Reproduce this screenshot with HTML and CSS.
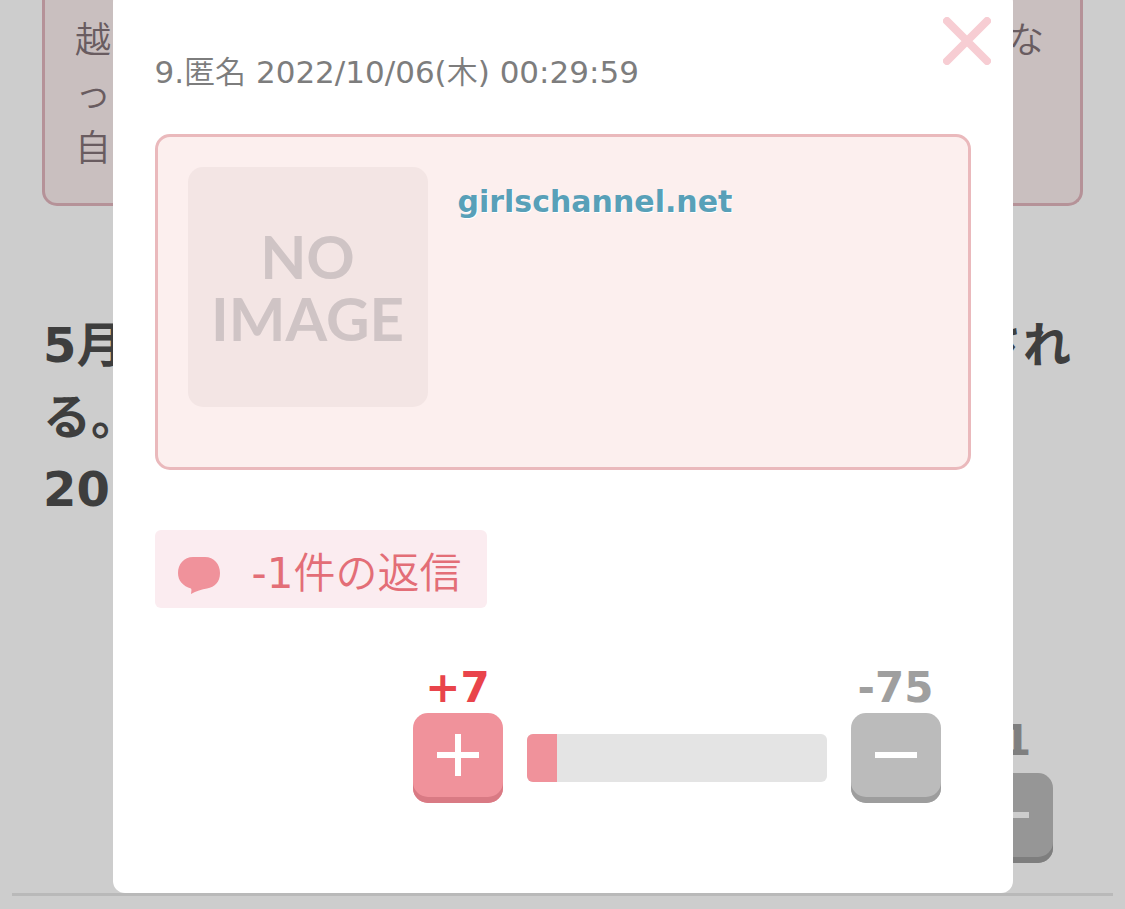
FILE: index.html
```html
<!DOCTYPE html>
<html lang="ja">
<head>
    <meta charset="UTF-8">
    <meta name="viewport" content="width=device-width, initial-scale=1.0">
    <title>コメント</title>
    <link rel="stylesheet" href="styles.css">
</head>
<body>

<main class="page">
    <div class="quote">
        <p class="line"><span>越</span><span>な</span></p>
        <p class="line">っ</p>
        <p class="line">自</p>
    </div>

    <div class="comment-body">
        <p class="line"><span>5月</span><span>され</span></p>
        <p class="line">る。</p>
        <p class="line">20</p>
    </div>

    <div class="vote">
        <div class="vote-item">
            <span class="count count-minus">-1</span>
            <button type="button" class="vote-btn btn-minus" aria-label="マイナス">
                <svg width="42" height="42" viewBox="0 0 42 42"><path d="M0 21H42" /></svg>
            </button>
        </div>
    </div>
    <hr>
</main>

<div class="overlay"></div>

<div class="modal" role="dialog">
    <button type="button" class="close" aria-label="閉じる">
        <svg width="48" height="48" viewBox="0 0 48 48"><path d="M4 4L44 44M44 4L4 44" /></svg>
    </button>

    <p class="info">9.<span class="light">匿名</span> 2022/10/06(<span class="light">木</span>) 00:29:59</p>

    <div class="card">
        <div class="thumb">NO<br>IMAGE</div>
        <a href="#" class="card-link">girlschannel.net</a>
    </div>

    <button type="button" class="reply">
        <svg width="42" height="37" viewBox="0 0 42 37"><path d="M15 0H27C36 0 42 7 42 16C42 25 37 30 29 31.500C24 32.500 18 34 13 37C13 35 14 33 13 31.500C5 29 0 24 0 16C0 7 6 0 15 0Z" /></svg>
        <span>-1<span class="light">件の返信</span></span>
    </button>

    <div class="vote">
        <div class="vote-item">
            <span class="count count-plus">+7</span>
            <button type="button" class="vote-btn btn-plus" aria-label="プラス">
                <svg width="42" height="42" viewBox="0 0 42 42"><path d="M0 21H42M21 0V42" /></svg>
            </button>
        </div>
        <div class="bar"><div class="bar-fill" style="width: 10%"></div></div>
        <div class="vote-item">
            <span class="count count-minus">-75</span>
            <button type="button" class="vote-btn btn-minus" aria-label="マイナス">
                <svg width="42" height="42" viewBox="0 0 42 42"><path d="M0 21H42" /></svg>
            </button>
        </div>
    </div>
</div>

</body>
</html>
```

FILE: styles.css
```css
body {
    margin: 0;
    background-color: #fff;
    font-family: Verdana, "DejaVu Sans", "Noto Sans CJK JP", sans-serif;
    overflow: hidden;
}
p {
    margin: 0;
}
button {
    font-family: inherit;
    border: none;
    padding: 0;
    cursor: pointer;
}
svg {
    display: block;
}
.light {
    font-weight: 350;
}

/* page behind the modal */
.quote {
    margin: 0 42px;
    padding: 14px 30px 27px;
    border: 3px solid #e2b6be;
    border-top: none;
    border-radius: 0 0 15px 15px;
    background-color: #faeeee;
    color: #837378;
    font-size: 36px;
    font-weight: 350;
    line-height: 54px;
}
.line {
    display: flex;
    justify-content: space-between;
}
.quote .line {
    padding-right: 6px;
}
.comment-body {
    margin: 103px 42px 0;
    padding: 0 12px 0 1px;
    color: #4e4e4e;
    font-size: 48px;
    font-weight: bold;
    line-height: 72px;
}
.page .vote {
    margin: 190px 72px 0;
}
.page .count {
    margin-bottom: 7px;
}
hr {
    margin: 30px 12px 0;
    border: none;
    border-top: 3px solid #e6e6e6;
}
.overlay {
    position: fixed;
    inset: 0;
    background-color: rgba(0, 0, 0, 0.196);
}

/* modal */
.modal {
    position: absolute;
    top: -10px;
    left: 10%;
    width: 80%;
    box-sizing: border-box;
    padding: 55px 42px 90px;
    border-radius: 12px;
    background-color: #fff;
}
.close {
    position: absolute;
    top: 27px;
    right: 22px;
    background: none;
}
.close path {
    fill: none;
    stroke: #f7cdd3;
    stroke-width: 8;
    stroke-linecap: round;
}
.info {
    color: #7d7d7d;
    font-size: 31px;
    line-height: 54px;
}
.card {
    display: flex;
    align-items: flex-start;
    gap: 30px;
    margin-top: 35px;
    padding: 30px 30px 60px;
    border: 3px solid #eab9bc;
    border-radius: 15px;
    background-color: #fcefee;
}
.thumb {
    display: flex;
    align-items: center;
    justify-content: center;
    width: 240px;
    height: 240px;
    border-radius: 15px;
    background-color: #f3e5e4;
    color: #cfc4c5;
    font-family: Lato, sans-serif;
    font-size: 60px;
    font-weight: bold;
    line-height: 62px;
    text-align: center;
}
.card-link {
    margin-top: 12px;
    color: #58a0b8;
    font-size: 30px;
    font-weight: bold;
    line-height: 45px;
    text-decoration: none;
    text-shadow: 1px 1px 0 #fff;
}
.reply {
    display: flex;
    align-items: center;
    gap: 32px;
    height: 78px;
    margin-top: 60px;
    padding: 0 26px 0 23px;
    border-radius: 6px;
    background-color: #fbecf0;
    color: #e36e77;
    font-size: 42px;
}
.reply svg {
    margin-top: 12px;
    fill: #f0929b;
}

/* plus / minus voting */
.vote {
    display: flex;
    justify-content: flex-end;
    align-items: flex-end;
    gap: 24px;
}
.modal .vote {
    margin: 54px 30px 0 0;
}
.vote-item {
    display: flex;
    flex-direction: column;
    align-items: center;
    width: 90px;
}
.count {
    font-size: 42px;
    font-weight: bold;
    line-height: 51px;
}
.count-plus {
    color: #e9444b;
}
.count-minus {
    color: #9f9f9f;
}
.vote-btn {
    display: flex;
    justify-content: center;
    width: 90px;
    height: 90px;
    padding-top: 21px;
    border-radius: 15px;
}
.vote-btn path {
    fill: none;
    stroke: #fff;
    stroke-width: 6;
}
.btn-plus {
    background-color: #f0929b;
    box-shadow: inset 0 -6px 0 #d97a84;
}
.btn-minus {
    background-color: #bbb;
    box-shadow: inset 0 -6px 0 #9d9d9d;
}
.bar {
    width: 300px;
    height: 48px;
    margin-bottom: 21px;
    border-radius: 6px;
    background-color: #e4e4e4;
    overflow: hidden;
}
.bar-fill {
    height: 100%;
    background-color: #f0929b;
}
```
